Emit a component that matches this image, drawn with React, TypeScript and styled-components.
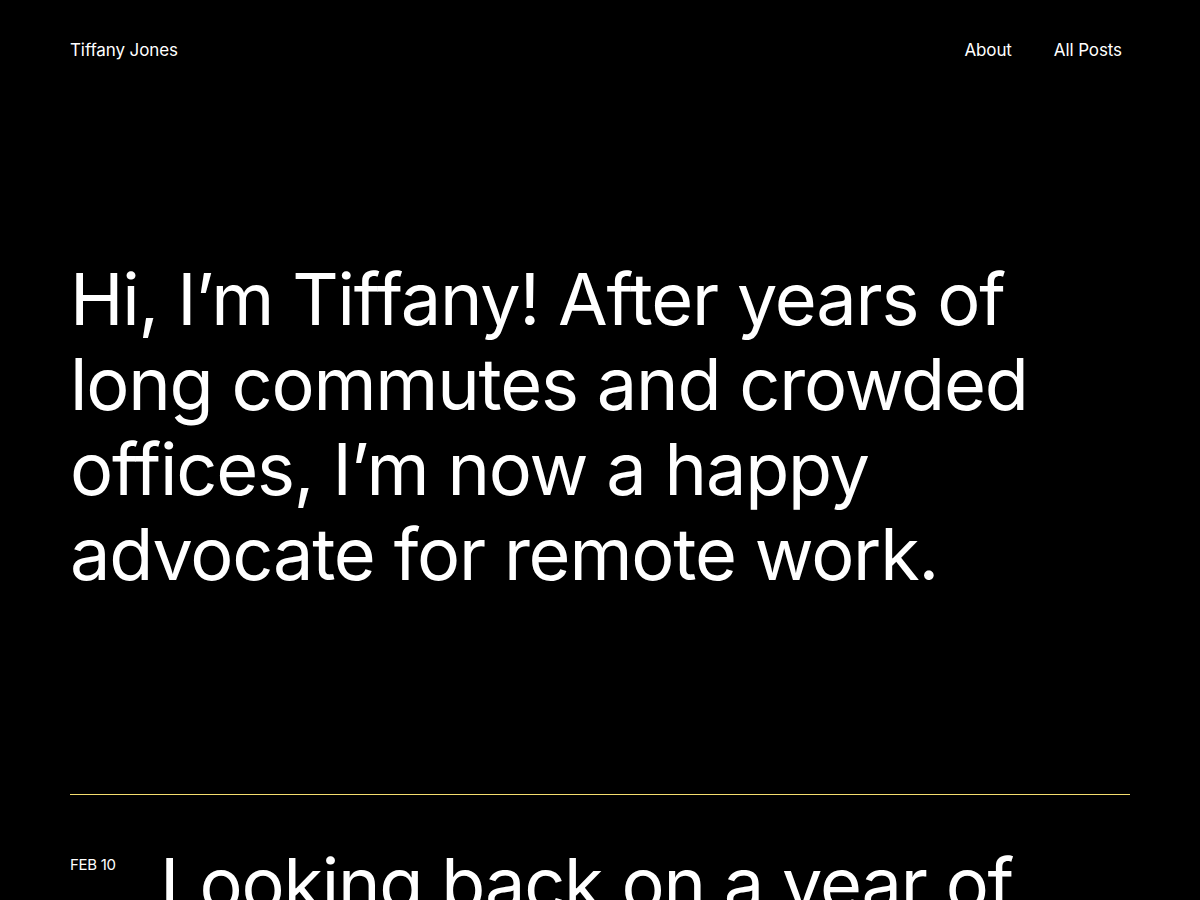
import React from "react";
import styled, { createGlobalStyle } from "styled-components";

const GlobalStyle = createGlobalStyle`
  html, body {
    margin: 0;
    padding: 0;
    background: #000;
    color: #fff;
    font-family: Inter, "Noto Sans", sans-serif;
  }
  * { box-sizing: border-box; }
`;

const Page = styled.div`
    min-height: 900px;
    padding: 0 70px;
    background: #000;
  `,
  Header = styled.header`
    display: flex;
    justify-content: space-between;
    align-items: center;
    height: 100px;
  `,
  SiteTitle = styled.a`
    font-size: 17px;
    color: #fff;
    text-decoration: none;
    letter-spacing: -0.1px;
  `,
  Nav = styled.nav`
    display: flex;
    gap: 42px;
    padding-right: 8px;
  `,
  NavLink = styled.a`
    font-size: 17px;
    color: #fff;
    text-decoration: none;
    letter-spacing: -0.1px;
  `,
  Hero = styled.section`
    padding: 156px 0 198px;
  `,
  Intro = styled.h1`
    margin: 0;
    max-width: 1000px;
    font-size: 72px;
    line-height: 85px;
    font-weight: 400;
    letter-spacing: -1.2px;
  `,
  Divider = styled.hr`
    margin: 0;
    border: 0;
    border-top: 1px solid #f4dd6e;
  `,
  PostRow = styled.article`
    display: grid;
    grid-template-columns: 90px 1fr;
    align-items: start;
    padding-top: 46px;
  `,
  PostDate = styled.time`
    font-size: 15px;
    text-transform: uppercase;
    letter-spacing: -0.3px;
    padding-top: 14px;
  `,
  PostTitle = styled.h2`
    margin: 0;
    font-size: 72px;
    line-height: 85px;
    font-weight: 400;
    letter-spacing: -1.2px;
  `;

const App: React.FC = () => (
  <>
    <GlobalStyle />
    <Page>
      <Header>
        <SiteTitle href="#">Tiffany Jones</SiteTitle>
        <Nav>
          <NavLink href="#">About</NavLink>
          <NavLink href="#">All Posts</NavLink>
        </Nav>
      </Header>
      <Hero>
        <Intro>
          Hi, I’m Tiffany! After years of long commutes and crowded offices,
          I’m now a happy advocate for remote work.
        </Intro>
      </Hero>
      <Divider />
      <PostRow>
        <PostDate>Feb 10</PostDate>
        <PostTitle>Looking back on a year of remote work</PostTitle>
      </PostRow>
    </Page>
  </>
);

export default App;
